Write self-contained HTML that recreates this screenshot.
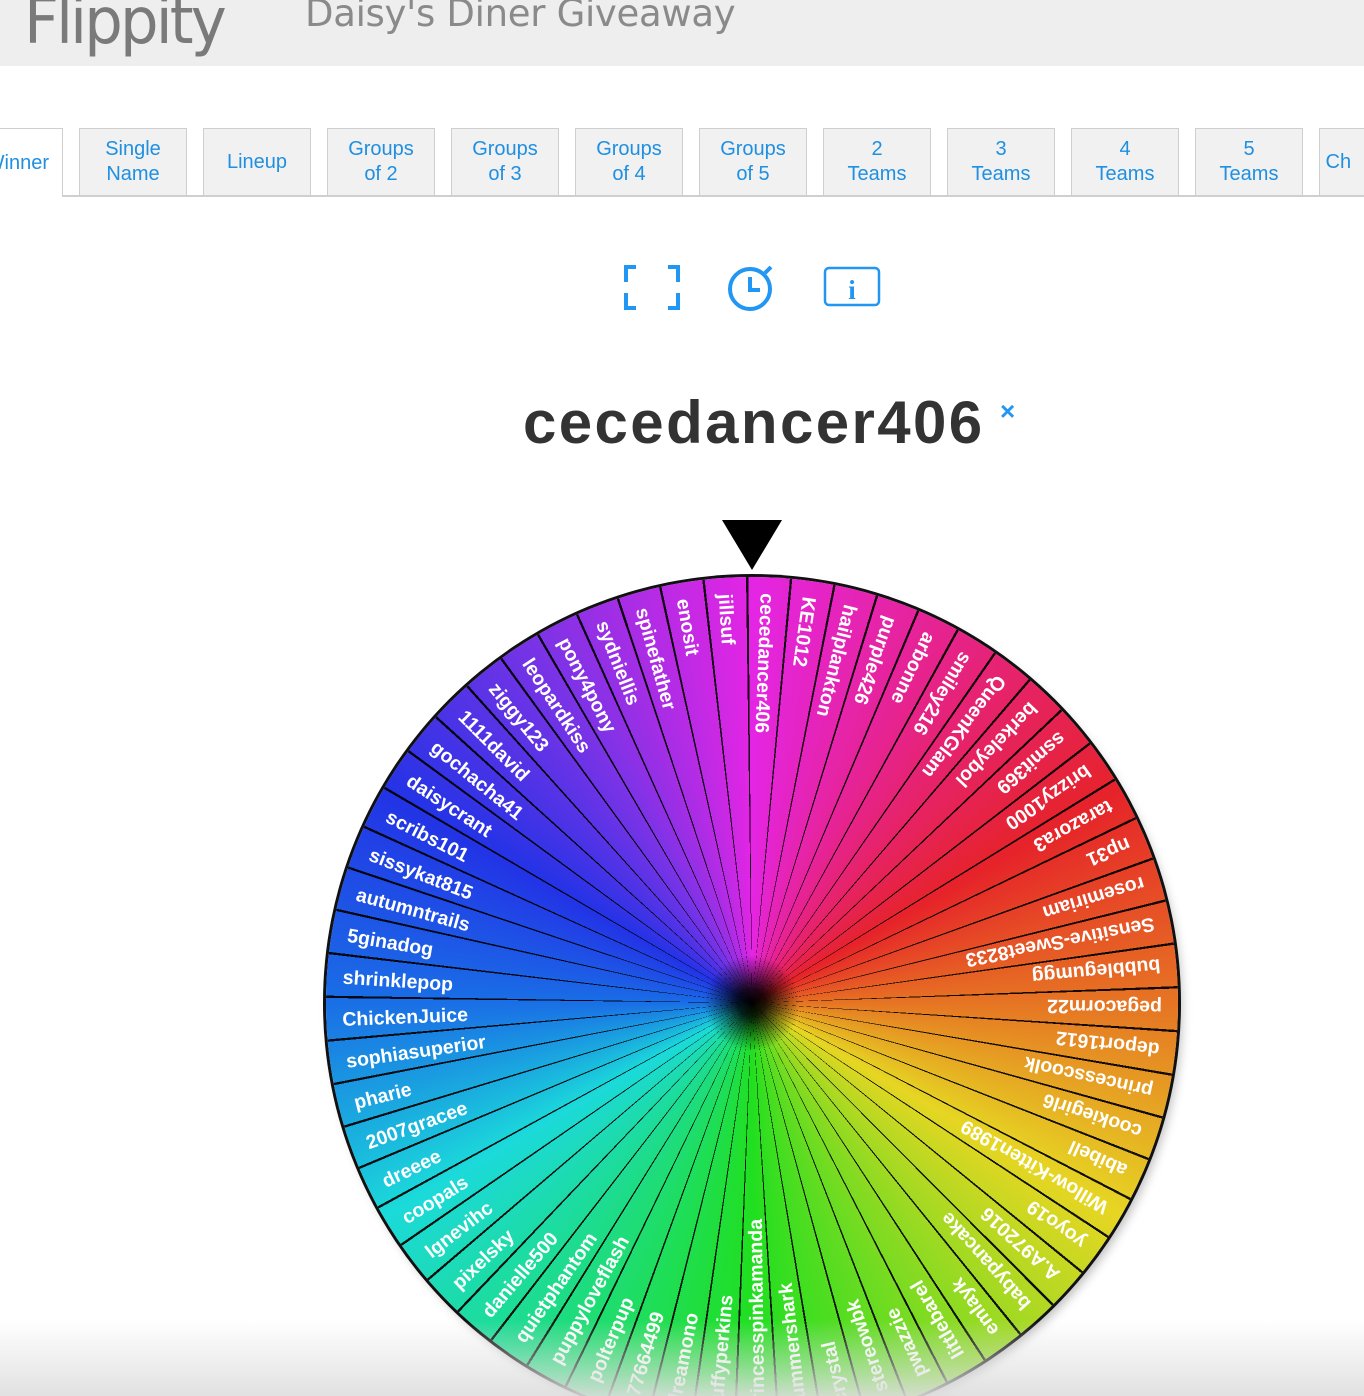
<!DOCTYPE html>
<html><head><meta charset="utf-8">
<style>
html,body{margin:0;padding:0;width:1364px;height:1396px;overflow:hidden;}
body{background:#fff;position:relative;font-family:"Liberation Sans",Arial,sans-serif;}
.hdr{position:absolute;left:0;top:0;width:1364px;height:66px;background:#eeeeee;overflow:hidden;}
.logo{position:absolute;left:24px;top:-10px;font-size:64px;line-height:64px;color:#7a7a7a;font-family:"DejaVu Sans","Liberation Sans",sans-serif;letter-spacing:-3px;transform:scaleX(0.95);transform-origin:left top;}
.title{position:absolute;left:305px;top:-8px;font-size:37px;color:#8a8a8a;font-family:"DejaVu Sans","Liberation Sans",sans-serif;font-weight:normal;letter-spacing:-0.3px;}
.tabline{position:absolute;left:63px;top:195px;width:1301px;height:2px;background:#cfcfcf;}
.tab{position:absolute;top:128px;width:106px;height:66px;background:#f1f1f1;border:1px solid #cfcfcf;color:#1e8fe1;font-size:20px;line-height:25px;text-align:center;display:flex;align-items:center;justify-content:center;box-sizing:content-box;}
.tab.act{background:#fff;border-bottom:none;height:68px;}
.wclip{position:absolute;left:0;top:500px;width:1364px;height:896px;overflow:hidden;}
.wheel{position:absolute;left:326px;top:77px;width:852px;height:852px;border-radius:50%;
background:
 radial-gradient(circle at center, rgba(0,0,0,1) 0px, rgba(0,0,0,.85) 14px, rgba(0,0,0,0) 48px),
 repeating-conic-gradient(from -0.8deg, rgba(0,0,0,.92) 0deg 0.32deg, rgba(0,0,0,0) 0.32deg 5.9016deg),
 conic-gradient(hsl(300,78%,52%), hsl(330,80%,52%), hsl(358,80%,52%) 60deg, hsl(25,80%,52%) 90deg, hsl(55,80%,52%) 120deg, hsl(120,75%,50%) 180deg, hsl(180,78%,48%) 240deg, hsl(215,80%,50%) 270deg, hsl(235,80%,52%) 300deg, hsl(265,78%,55%) 330deg, hsl(300,78%,52%) 360deg);
box-shadow:0 0 0 3px #111, 4px 6px 10px rgba(0,0,0,.25);}
svg text.n{font-family:"Liberation Sans",Arial,sans-serif;font-weight:bold;font-size:19.5px;fill:#fff;}
.fade{position:absolute;left:0;top:1320px;width:1364px;height:76px;background:linear-gradient(rgba(228,228,228,0),rgba(222,222,222,.9));}
</style></head><body>
<div class="hdr"><div class="logo">Flippity</div><div class="title">Daisy's Diner Giveaway</div></div>

<div class="tabline"></div>
<div class="tab act" style="left:-45px;">&nbsp;&nbsp;&nbsp;Winner</div>
<div class="tab" style="left:79px;">Single<br>Name</div>
<div class="tab" style="left:203px;">Lineup</div>
<div class="tab" style="left:327px;">Groups<br>of 2</div>
<div class="tab" style="left:451px;">Groups<br>of 3</div>
<div class="tab" style="left:575px;">Groups<br>of 4</div>
<div class="tab" style="left:699px;">Groups<br>of 5</div>
<div class="tab" style="left:823px;">2<br>Teams</div>
<div class="tab" style="left:947px;">3<br>Teams</div>
<div class="tab" style="left:1071px;">4<br>Teams</div>
<div class="tab" style="left:1195px;">5<br>Teams</div>
<div class="tab" style="left:1319px;justify-content:flex-start;">&nbsp;Ch</div>

<svg style="position:absolute;left:620px;top:260px" width="270" height="56" viewBox="0 0 270 56">
 <g fill="none" stroke="#2196f3" stroke-width="4">
  <path d="M6 22V7h10M48 7h10v15M6 33v15h10M48 48h10V33"/>
  <circle cx="130" cy="29" r="20"/>
  <path d="M130 17v13h10"/>
  <path d="M145 13l6-6"/>
  <rect x="205" y="8" width="54" height="37" rx="4" stroke-width="2.5"/>
 </g>
 <text x="232" y="39" text-anchor="middle" font-family="Liberation Serif,serif" font-weight="bold" font-size="27" fill="#2196f3">i</text>
</svg>

<div style="position:absolute;left:523px;top:388px;font-size:60px;font-weight:bold;color:#333;letter-spacing:2.4px;line-height:70px;">cecedancer406</div>
<div style="position:absolute;left:1000px;top:396px;font-size:26px;font-weight:bold;color:#2196f3;">×</div>

<svg style="position:absolute;left:720px;top:518px" width="64" height="54"><polygon points="2,2 62,2 32,52" fill="#000"/></svg>

<div class="wclip">
<div class="wheel"></div>
<svg style="position:absolute;left:326px;top:77px" width="852" height="852" viewBox="0 0 852 852">
<g transform="translate(426,426)">
<text class="n" x="-410" dy="7" transform="rotate(92.2)">cecedancer406</text>
<text class="n" x="-410" dy="7" transform="rotate(98.10)">KE1012</text>
<text class="n" x="-410" dy="7" transform="rotate(104.00)">hailplankton</text>
<text class="n" x="-410" dy="7" transform="rotate(109.90)">purple426</text>
<text class="n" x="-410" dy="7" transform="rotate(115.81)">arbonne</text>
<text class="n" x="-410" dy="7" transform="rotate(121.71)">smiley216</text>
<text class="n" x="-410" dy="7" transform="rotate(127.61)">QueenKGlam</text>
<text class="n" x="-410" dy="7" transform="rotate(133.51)">berkeleybol</text>
<text class="n" x="-410" dy="7" transform="rotate(139.41)">ssmit369</text>
<text class="n" x="-410" dy="7" transform="rotate(145.31)">brizzy1000</text>
<text class="n" x="-410" dy="7" transform="rotate(151.22)">tarazora3</text>
<text class="n" x="-410" dy="7" transform="rotate(157.12)">np31</text>
<text class="n" x="-410" dy="7" transform="rotate(163.02)">rosemiriam</text>
<text class="n" x="-410" dy="7" transform="rotate(168.92)">Sensitive-Sweet8233</text>
<text class="n" x="-410" dy="7" transform="rotate(174.82)">bubblegumgg</text>
<text class="n" x="-410" dy="7" transform="rotate(180.72)">pegacorm22</text>
<text class="n" x="-410" dy="7" transform="rotate(186.63)">deport1612</text>
<text class="n" x="-410" dy="7" transform="rotate(192.53)">princesscoolk</text>
<text class="n" x="-410" dy="7" transform="rotate(198.43)">cookiegirl6</text>
<text class="n" x="-410" dy="7" transform="rotate(204.33)">abibell</text>
<text class="n" x="-410" dy="7" transform="rotate(210.23)">Willow-Kitten1989</text>
<text class="n" x="-410" dy="7" transform="rotate(216.13)">yoyo19</text>
<text class="n" x="-410" dy="7" transform="rotate(222.04)">A.A972016</text>
<text class="n" x="-410" dy="7" transform="rotate(227.94)">babypancake</text>
<text class="n" x="-410" dy="7" transform="rotate(233.84)">emlayk</text>
<text class="n" x="-410" dy="7" transform="rotate(239.74)">littlebarel</text>
<text class="n" x="-410" dy="7" transform="rotate(245.64)">pwazzie</text>
<text class="n" x="-410" dy="7" transform="rotate(251.54)">stereowbk</text>
<text class="n" x="-410" dy="7" transform="rotate(257.45)">crystal</text>
<text class="n" x="-410" dy="7" transform="rotate(263.35)">summershark</text>
<text class="n" x="-410" dy="7" transform="rotate(269.25)">princesspinkamanda</text>
<text class="n" x="-410" dy="7" transform="rotate(275.15)">fluffyperkins</text>
<text class="n" x="-410" dy="7" transform="rotate(281.05)">dreamono</text>
<text class="n" x="-410" dy="7" transform="rotate(286.96)">77664499</text>
<text class="n" x="-410" dy="7" transform="rotate(292.86)">polterpup</text>
<text class="n" x="-410" dy="7" transform="rotate(298.76)">puppyloveflash</text>
<text class="n" x="-410" dy="7" transform="rotate(304.66)">quietphantom</text>
<text class="n" x="-410" dy="7" transform="rotate(310.56)">danielle500</text>
<text class="n" x="-410" dy="7" transform="rotate(316.46)">pixelsky</text>
<text class="n" x="-410" dy="7" transform="rotate(322.37)">lgnevihc</text>
<text class="n" x="-410" dy="7" transform="rotate(328.27)">coopals</text>
<text class="n" x="-410" dy="7" transform="rotate(334.17)">dreeee</text>
<text class="n" x="-410" dy="7" transform="rotate(340.07)">2007gracee</text>
<text class="n" x="-410" dy="7" transform="rotate(345.97)">pharie</text>
<text class="n" x="-410" dy="7" transform="rotate(351.88)">sophiasuperior</text>
<text class="n" x="-410" dy="7" transform="rotate(357.78)">ChickenJuice</text>
<text class="n" x="-410" dy="7" transform="rotate(363.68)">shrinklepop</text>
<text class="n" x="-410" dy="7" transform="rotate(369.58)">5ginadog</text>
<text class="n" x="-410" dy="7" transform="rotate(375.48)">autumntrails</text>
<text class="n" x="-410" dy="7" transform="rotate(381.38)">sissykat815</text>
<text class="n" x="-410" dy="7" transform="rotate(387.29)">scribs101</text>
<text class="n" x="-410" dy="7" transform="rotate(393.19)">daisycrant</text>
<text class="n" x="-410" dy="7" transform="rotate(399.09)">gochacha41</text>
<text class="n" x="-410" dy="7" transform="rotate(404.99)">1111david</text>
<text class="n" x="-410" dy="7" transform="rotate(410.89)">ziggy123</text>
<text class="n" x="-410" dy="7" transform="rotate(416.80)">leopardkiss</text>
<text class="n" x="-410" dy="7" transform="rotate(422.70)">pony4pony</text>
<text class="n" x="-410" dy="7" transform="rotate(428.60)">sydniellis</text>
<text class="n" x="-410" dy="7" transform="rotate(434.50)">spinefather</text>
<text class="n" x="-410" dy="7" transform="rotate(440.40)">enosit</text>
<text class="n" x="-410" dy="7" transform="rotate(446.31)">jillsuf</text>
</g>
</svg>
</div>
<div class="fade"></div>
</body></html>
